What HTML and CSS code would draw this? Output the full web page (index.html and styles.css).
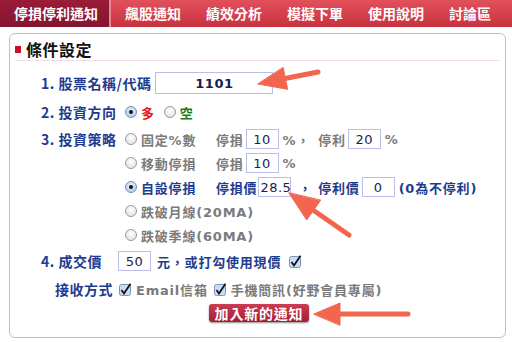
FILE: index.html
```html
<!DOCTYPE html>
<html lang="zh-Hant">
<head>
<meta charset="UTF-8">
<title>停損停利通知</title>
<link rel="stylesheet" href="styles.css">
</head>
<body>
<div class="page">
    <div class="tabs">
        <div class="tab active">停損停利通知</div>
        <div class="tab">飆股通知</div>
        <div class="tab">績效分析</div>
        <div class="tab">模擬下單</div>
        <div class="tab">使用說明</div>
        <div class="tab">討論區</div>
    </div>

    <div class="panel">
        <div class="panel-title"><span class="mark"></span>條件設定</div>

        <div class="form">
            <div class="row row-1">
                <span class="label">1. 股票名稱/代碼</span>
                <span class="input wide">1101</span>
            </div>

            <div class="row row-2">
                <span class="label w84">2. 投資方向</span>
                <span class="radio on"></span><span class="red">多</span>
                <span class="radio gap"></span><span class="green">空</span>
            </div>

            <div class="row row-3">
                <span class="label w84">3. 投資策略</span>
                <span class="radio"></span><span class="strat grey">固定%數</span>
                <span class="grey">停損</span><span class="input small">10</span>
                <span class="grey pct">%，</span><span class="grey sub">停利</span><span class="input small">20</span>
                <span class="grey pct">%</span>
            </div>

            <div class="row sub-row">
                <span class="radio"></span><span class="strat grey">移動停損</span>
                <span class="grey">停損</span><span class="input small">10</span>
                <span class="grey pct">%</span>
            </div>

            <div class="row sub-row">
                <span class="radio on"></span><span class="strat blue">自設停損</span>
                <span class="blue">停損價</span><span class="input small tight">28.5</span>
                <span class="blue comma">，</span><span class="blue">停利價</span><span class="input small">0</span>
                <span class="blue note">(0為不停利)</span>
            </div>

            <div class="row sub-row">
                <span class="radio"></span><span class="grey">跌破月線(20MA)</span>
            </div>

            <div class="row sub-row last">
                <span class="radio"></span><span class="grey">跌破季線(60MA)</span>
            </div>

            <div class="row row-4">
                <span class="label w75">4. 成交價</span>
                <span class="input small">50</span>
                <span class="blue unit">元，或打勾使用現價</span>
                <span class="check after-text"><svg width="13" height="13" viewBox="0 0 13 13"><rect x="0.5" y="1.5" width="11" height="11" rx="2" fill="#c9dcf2" stroke="#7d94b8"/><path d="M2.5 7 L5 10.5 L11.5 0.8" fill="none" stroke="#111" stroke-width="1.8"/></svg></span>
            </div>

            <div class="row row-recv">
                <span class="label recv">接收方式</span>
                <span class="check"><svg width="13" height="13" viewBox="0 0 13 13"><rect x="0.5" y="1.5" width="11" height="11" rx="2" fill="#c9dcf2" stroke="#7d94b8"/><path d="M2.5 7 L5 10.5 L11.5 0.8" fill="none" stroke="#111" stroke-width="1.8"/></svg></span>
                <span class="grey opt">Email信箱</span>
                <span class="check"><svg width="13" height="13" viewBox="0 0 13 13"><rect x="0.5" y="1.5" width="11" height="11" rx="2" fill="#c9dcf2" stroke="#7d94b8"/><path d="M2.5 7 L5 10.5 L11.5 0.8" fill="none" stroke="#111" stroke-width="1.8"/></svg></span>
                <span class="grey opt">手機簡訊(好野會員專屬)</span>
            </div>

            <div class="actions">
                <button class="btn">加入新的通知</button>
            </div>
        </div>
    </div>

    <!-- annotation arrows -->
    <svg class="arrows" width="512" height="342" viewBox="0 0 512 342">
        <g fill="#f2664f" stroke="#f2664f" stroke-linecap="round">
            <line x1="285" y1="78.5" x2="318" y2="72" stroke-width="5"/>
            <polygon points="258,84 287.6,89.3 283.2,67.7" stroke-width="1" stroke-linejoin="round"/>
            <line x1="313" y1="210" x2="349" y2="235" stroke-width="5"/>
            <polygon points="289,193 306.7,220 320.5,200.4" stroke-width="1" stroke-linejoin="round"/>
            <line x1="338" y1="314" x2="408" y2="314" stroke-width="5"/>
            <polygon points="314,314 340,303 340,325" stroke-width="1" stroke-linejoin="round"/>
        </g>
    </svg>
</div>
</body>
</html>
```
FILE: styles.css
```css
body {
    margin: 0;
    background-color: #ffffff;
    font-family: "DejaVu Sans", "Noto Sans CJK TC", sans-serif;
    font-size: 13px;
    font-weight: bold;
}

.page {
    position: relative;
    width: 512px;
    height: 342px;
    overflow: hidden;
}

.tabs {
    display: flex;
    height: 27px;
    background: linear-gradient(#e2505c, #c8323f);
}

.tab {
    padding: 0 11px 0 14px;
    line-height: 27px;
    color: #ffffff;
    font-family: "Noto Sans CJK TC", sans-serif;
    font-size: 14px;
    white-space: nowrap;
}

.tab.active {
    background: linear-gradient(#9a1c38, #84142e);
    border-right: 2px solid #e88a94;
}

.panel {
    margin: 6px 6px 0 9px;
    height: 303px;
    border: 1px solid #dbb2c8;
    border-radius: 6px;
}

.panel-title {
    display: flex;
    align-items: center;
    margin: 0 5px;
    padding-top: 4px;
    height: 22px;
    border-bottom: 1px solid #f1dde6;
    font-family: "Noto Sans CJK TC", sans-serif;
    font-size: 16px;
    color: #111111;
    letter-spacing: 0.5px;
}

.mark {
    width: 6px;
    height: 7px;
    margin-right: 5px;
    background-color: #c8102a;
}

.form {
    padding-left: 31px;
}

.row {
    display: flex;
    align-items: center;
    height: 22px;
    margin-top: 2px;
    white-space: nowrap;
    letter-spacing: 0.8px;
}

.row-1 { margin-top: 11px; color: #1d3c8f; }
.row-2 { margin-top: 7px; }
.row-3 { margin-top: 5px; }
.sub-row { padding-left: 84px; }
.row-4 { margin-top: 4px; }
.row-recv { margin-top: 6px; }

.label {
    color: #1d3c8f;
    font-family: "Noto Sans CJK TC", sans-serif;
    font-size: 14px;
    letter-spacing: 0.5px;
}

.w84 { width: 84px; }
.w75 { width: 75px; }
.recv { margin-left: 14px; width: 64px; }

.input {
    display: inline-flex;
    justify-content: center;
    align-items: center;
    box-sizing: border-box;
    height: 20px;
    border: 1px solid #b9bdea;
    color: #1b1d4e;
    font-size: 13px;
    font-weight: normal;
    letter-spacing: 0.5px;
}

.input.wide {
    width: 118px;
    height: 22px;
    margin-left: 4px;
    font-weight: bold;
}

.input.small {
    width: 33px;
    margin-left: 2px;
}

.input.tight {
    justify-content: flex-start;
    padding-left: 1px;
    margin-left: 1px;
}

.radio {
    position: relative;
    box-sizing: border-box;
    width: 12px;
    height: 12px;
    margin-right: 4px;
    border: 1px solid #9a9a9a;
    border-radius: 50%;
    background: radial-gradient(circle at 50% 35%, #ffffff, #dcdcdc);
}

.radio.on {
    border-color: #6f8fc0;
    background: radial-gradient(circle at 50% 35%, #e8f1fb, #a8c4e6);
}

.radio.on::after {
    content: "";
    position: absolute;
    left: 3px;
    top: 3px;
    width: 4px;
    height: 4px;
    border-radius: 50%;
    background-color: #111111;
}

.radio.gap { margin-left: 9px; }

.red { color: #e8111c; font-family: "Noto Sans CJK TC", sans-serif; }
.green { color: #1b7d1b; font-family: "Noto Sans CJK TC", sans-serif; }
.grey { color: #7b7b7b; }
.blue { color: #1d3c8f; }

.strat { width: 75px; }
.pct { margin-left: 4px; }
.sub { margin-left: 8px; }
.comma { margin-left: 7px; margin-right: 6px; }
.note { margin-left: 4px; }
.unit { margin-left: 6px; }

.check {
    display: inline-flex;
    width: 13px;
    height: 13px;
    margin-right: 4px;
}

.check.after-text { margin-left: 8px; }

.opt { margin-right: 6px; }

.actions {
    display: flex;
    justify-content: center;
    margin-top: 4px;
    padding-right: 28px;
}

.btn {
    height: 18px;
    padding: 0 6px;
    border: none;
    border-radius: 3px;
    background: linear-gradient(#cc3c52, #a41d35);
    box-shadow: 0 1px 2px rgba(0, 0, 0, 0.45);
    color: #ffffff;
    font-family: "Noto Sans CJK TC", sans-serif;
    font-size: 14px;
    font-weight: bold;
    line-height: 18px;
    letter-spacing: 0.8px;
}

.arrows {
    position: absolute;
    top: 0;
    left: 0;
    pointer-events: none;
}
```
